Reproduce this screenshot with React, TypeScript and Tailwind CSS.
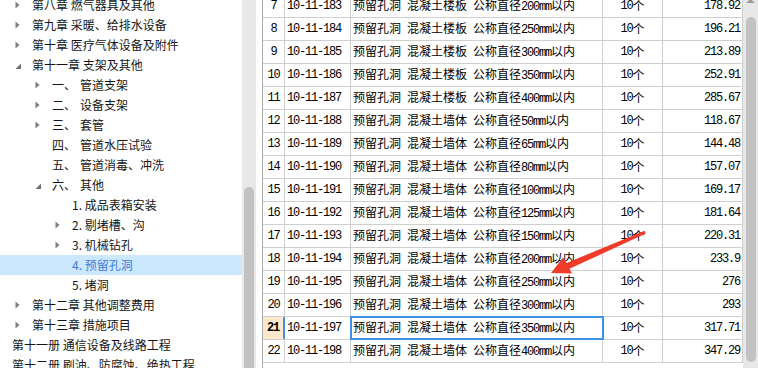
import React from "react";

// Types
interface TreeNode {
  label: string;
  prefix?: string;
  level: 0 | 1 | 2 | 3;
  arrow?: "closed" | "open";
  selected?: boolean;
}

interface QuotaRow {
  no: number;
  code: string;
  name: string;
  unit: string;
  price: string;
}

/* Constants */
const TREE: TreeNode[] = [
  { level: 1, arrow: "closed", label: "第八章 燃气器具及其他" },
  { level: 1, arrow: "closed", label: "第九章 采暖、给排水设备" },
  { level: 1, arrow: "closed", label: "第十章 医疗气体设备及附件" },
  { level: 1, arrow: "open", label: "第十一章 支架及其他" },
  { level: 2, arrow: "closed", prefix: "一、", label: "管道支架" },
  { level: 2, arrow: "closed", prefix: "二、", label: "设备支架" },
  { level: 2, arrow: "closed", prefix: "三、", label: "套管" },
  { level: 2, prefix: "四、", label: "管道水压试验" },
  { level: 2, prefix: "五、", label: "管道消毒、冲洗" },
  { level: 2, arrow: "open", prefix: "六、", label: "其他" },
  { level: 3, label: "1. 成品表箱安装" },
  { level: 3, arrow: "closed", label: "2. 剔堵槽、沟" },
  { level: 3, arrow: "closed", label: "3. 机械钻孔" },
  { level: 3, label: "4. 预留孔洞", selected: true },
  { level: 3, label: "5. 堵洞" },
  { level: 1, arrow: "closed", label: "第十二章 其他调整费用" },
  { level: 1, arrow: "closed", label: "第十三章 措施项目" },
  { level: 0, label: "第十一册 通信设备及线路工程" },
  { level: 0, label: "第十二册 刷油、防腐蚀、绝热工程" },
];

const INDENT: Record<number, string> = {
  0: "pl-[12px]",
  1: "pl-[15px]",
  2: "pl-[35px]",
  3: "pl-[55px]",
};

const SIZES: [string, string][] = [
  ["楼板", "200"],
  ["楼板", "250"],
  ["楼板", "300"],
  ["楼板", "350"],
  ["楼板", "400"],
  ["墙体", "50"],
  ["墙体", "65"],
  ["墙体", "80"],
  ["墙体", "100"],
  ["墙体", "125"],
  ["墙体", "150"],
  ["墙体", "200"],
  ["墙体", "250"],
  ["墙体", "300"],
  ["墙体", "350"],
  ["墙体", "400"],
];

const PRICES = [
  "178.92", "196.21", "213.89", "252.91", "285.67", "118.67", "144.48", "157.07",
  "169.17", "181.64", "220.31", "233.9", "276", "293", "317.71", "347.29",
];

const ROWS: QuotaRow[] = SIZES.map(([part, dn], i) => ({
  no: 7 + i,
  code: `10-11-${183 + i}`,
  name: `预留孔洞 混凝土${part} 公称直径${dn}mm以内`,
  unit: "10个",
  price: PRICES[i],
}));

const SELECTED_NO = 21;

// ASCII runs get a monospace face so digits keep the 6px grid of the original
const Txt: React.FC<{ s: string }> = ({ s }) => (
  <>
    {s.split(/([\x20-\x7e]+)/).map((part, i) =>
      /[\x20-\x7e]/.test(part) ? (
        <span
          key={i}
          className="whitespace-pre font-['Liberation_Mono',monospace] text-[12px] tracking-[-1.2px]"
        >
          {part}
        </span>
      ) : (
        part
      )
    )}
  </>
);

const Arrow: React.FC<{ kind?: "closed" | "open" }> = ({ kind }) => (
  <span className="flex w-[17px] shrink-0 items-center">
    {kind === "closed" && (
      <svg width="5" height="8" viewBox="0 0 5 8">
        <polygon points="0.5,0.5 4.5,4 0.5,7.5" fill="#7d7d7d" />
      </svg>
    )}
    {kind === "open" && (
      <svg width="7" height="7" viewBox="0 0 7 7" className="mt-[3px]">
        <polygon points="6,0.5 6,6 0.5,6" fill="#6f6f6f" />
      </svg>
    )}
  </span>
);

const App: React.FC = () => {
  /* Functions */
  const renderTree = (): React.ReactNode => (
    <div className="w-[242px] shrink-0 overflow-hidden">
      <div className="-mt-[5px] flex flex-col">
        {TREE.map((node, i) => (
          <div
            key={i}
            className={`flex h-[20px] shrink-0 items-center whitespace-nowrap ${INDENT[node.level]} ${
              node.selected ? "bg-[#cce8ff] text-[#3f7ddb]" : "text-[#161616]"
            }`}
          >
            {node.level > 0 && <Arrow kind={node.arrow} />}
            {node.prefix && <span className="inline-block w-[28px]">{node.prefix}</span>}
            <span>{node.label}</span>
          </div>
        ))}
      </div>
    </div>
  );

  const renderLeftScroll = (): React.ReactNode => (
    <div className="flex w-[14px] shrink-0 flex-col items-center overflow-hidden bg-[#e8e8e8]">
      <svg width="8" height="3" viewBox="0 0 8 3" className="ml-[4px]">
        <polygon points="0,3 8,3 4,-1" fill="#8a8a8a" />
      </svg>
      <div className="mt-[187px] h-[200px] w-[10px] shrink-0 rounded-full bg-[#c2c2c2]" />
    </div>
  );

  const renderRow = (row: QuotaRow): React.ReactNode => {
    const selected = row.no === SELECTED_NO;
    return (
      <div key={row.no} className="flex h-[23px] shrink-0 border-b border-[#cfcfcf]">
        <div
          className={`flex w-[22px] shrink-0 items-center justify-center ${
            selected
              ? "border-r-2 border-[#3d8ee6] bg-[#fde8cc] font-bold"
              : "border-r border-[#cfcfcf]"
          }`}
        >
          <Txt s={String(row.no)} />
        </div>
        <div className="flex w-[66px] shrink-0 items-center border-r border-[#cfcfcf] pl-[2px]">
          <Txt s={row.code} />
        </div>
        <div className="relative flex w-[252px] shrink-0 items-center border-r border-[#cfcfcf] pl-[2px]">
          <span className="whitespace-nowrap">
            <Txt s={row.name} />
          </span>
          {selected && (
            <span className="absolute -top-px -right-[2px] -bottom-px -left-px border-2 border-[#3d8ee6]" />
          )}
        </div>
        <div className="flex w-[60px] shrink-0 items-center justify-center border-r border-[#cfcfcf]">
          <Txt s={row.unit} />
        </div>
        <div className="flex w-[80px] shrink-0 items-center justify-end border-r border-[#cfcfcf] pr-[2px]">
          <Txt s={row.price} />
        </div>
      </div>
    );
  };

  const renderRightScroll = (): React.ReactNode => (
    <div className="flex w-[15px] shrink-0 flex-col items-center bg-[#e8e8e8]">
      <svg width="9" height="3" viewBox="0 0 9 3">
        <polygon points="0,3 9,3 4.5,-1" fill="#9a9a9a" />
      </svg>
      <div className="mt-[14px] h-[345px] w-[10px] shrink-0 rounded-full bg-[#c2c2c2]" />
    </div>
  );

  /* Output */
  return (
    <div className="relative flex h-[368px] w-[758px] overflow-hidden bg-white font-['Noto_Sans_CJK_SC',sans-serif] text-[12px] leading-none text-black">
      {renderTree()}
      {renderLeftScroll()}
      <div className="w-[6px] shrink-0" />
      <div className="flex flex-1 border-l border-[#a9a9a9]">
        <div className="flex w-[480px] flex-col overflow-hidden">
          <div className="-mt-[5px] flex flex-col">{ROWS.map(renderRow)}</div>
        </div>
        {renderRightScroll()}
      </div>

      {/* annotation arrow */}
      <svg className="pointer-events-none absolute inset-0" width="758" height="368">
        <polygon
          points="551,273 563,257.5 566.5,263 644.5,230.8 645.8,233.6 569.5,268.8 572,273.5"
          fill="#ef3b2a"
        />
      </svg>
    </div>
  );
};

export default App;
